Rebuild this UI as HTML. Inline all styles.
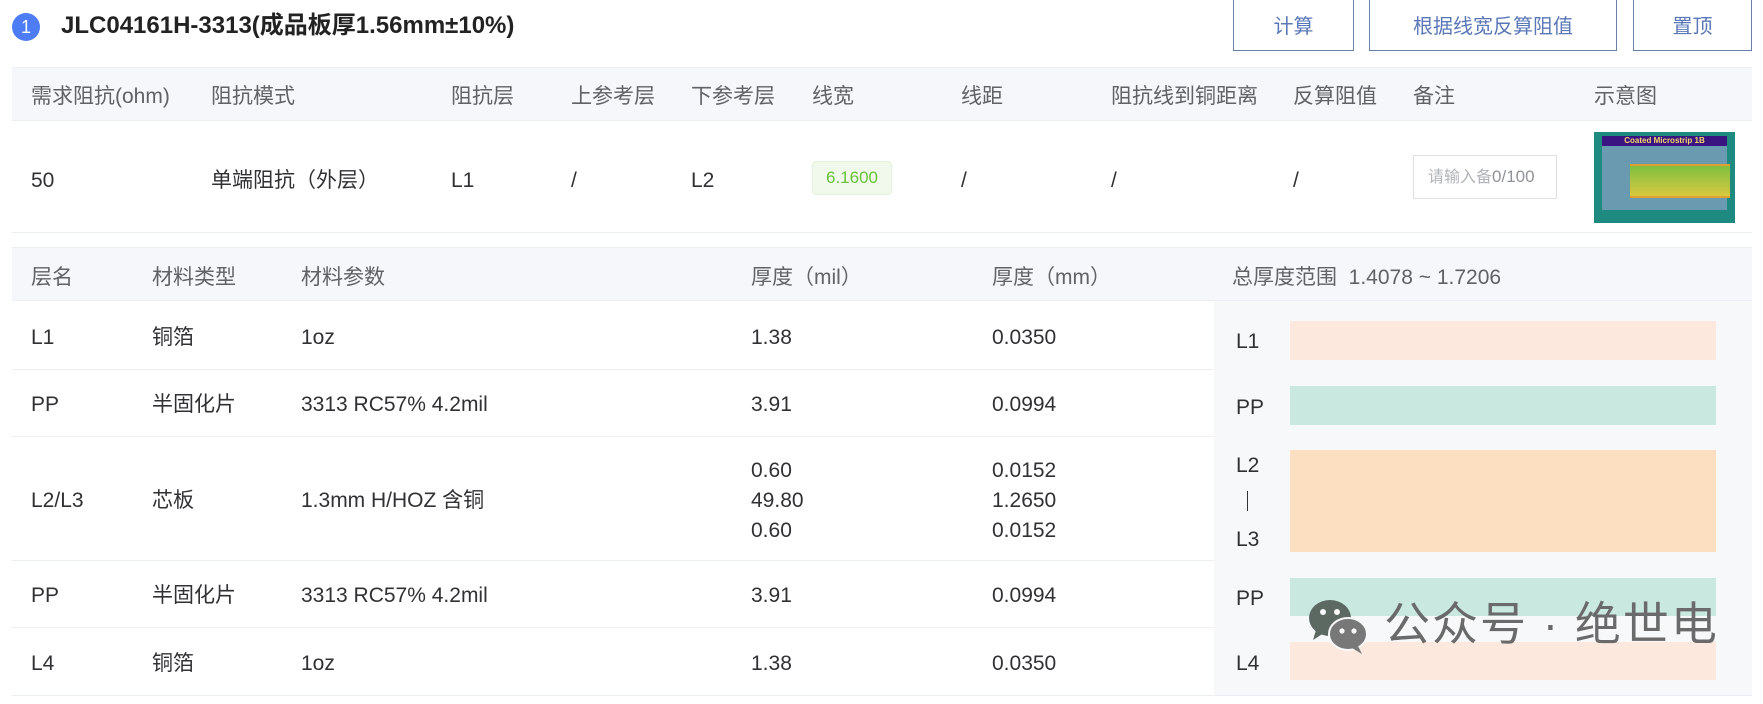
<!DOCTYPE html>
<html><head><meta charset="utf-8"><style>
*{margin:0;padding:0;box-sizing:border-box}
body{width:1763px;height:704px;background:#fff;position:relative;overflow:hidden;font-family:"Liberation Sans","Noto Sans CJK SC",sans-serif;font-size:21px;color:#303133}
.a{position:absolute;white-space:nowrap;line-height:26px}
.t{margin-top:3px}
.h{color:#606266}
.btn{position:absolute;top:-2px;height:53px;border:1px solid #6a7fa8;color:#5a78b8;font-size:20px;display:flex;align-items:center;justify-content:center;background:#fff}
.bar{position:absolute;left:1290px;width:426px}
.ln{position:absolute;height:1px;background:#ebeef5}
</style></head><body>
<div class="a" style="left:12px;top:13px;width:28px;height:28px;border-radius:50%;background:#4d7cf5;color:#fff;font-size:18px;text-align:center;line-height:28px">1</div>
<div class="a" style="left:61px;top:11px;font-size:24px;line-height:30px;font-weight:bold;color:#222">JLC04161H-3313(成品板厚1.56mm±10%)</div>
<div class="btn" style="left:1233px;width:121px">计算</div>
<div class="btn" style="left:1369px;width:248px">根据线宽反算阻值</div>
<div class="btn" style="left:1633px;width:119px">置顶</div>

<div class="a" style="left:12px;top:67px;width:1740px;height:54px;background:#f5f7fa;border-top:1px solid #ebeef5;border-bottom:1px solid #ebeef5"></div>
<div class="a h t" style="left:31px;top:81px">需求阻抗(ohm)</div>
<div class="a h t" style="left:211px;top:81px">阻抗模式</div>
<div class="a h t" style="left:451px;top:81px">阻抗层</div>
<div class="a h t" style="left:571px;top:81px">上参考层</div>
<div class="a h t" style="left:691px;top:81px">下参考层</div>
<div class="a h t" style="left:812px;top:81px">线宽</div>
<div class="a h t" style="left:961px;top:81px">线距</div>
<div class="a h t" style="left:1111px;top:81px">阻抗线到铜距离</div>
<div class="a h t" style="left:1293px;top:81px">反算阻值</div>
<div class="a h t" style="left:1413px;top:81px">备注</div>
<div class="a h t" style="left:1594px;top:81px">示意图</div>

<div class="a t" style="left:31px;top:165px">50</div>
<div class="a t" style="left:211px;top:165px">单端阻抗（外层）</div>
<div class="a t" style="left:451px;top:165px">L1</div>
<div class="a t" style="left:571px;top:165px">/</div>
<div class="a t" style="left:691px;top:165px">L2</div>
<div class="a" style="left:812px;top:161px;width:80px;height:34px;background:#f0f9eb;border:1px solid #e1f3d8;border-radius:4px;color:#67c23a;font-size:17px;text-align:center;line-height:32px">6.1600</div>
<div class="a t" style="left:961px;top:165px">/</div>
<div class="a t" style="left:1111px;top:165px">/</div>
<div class="a t" style="left:1293px;top:165px">/</div>
<div class="a" style="left:1413px;top:155px;width:144px;height:44px;border:1px solid #dcdfe6;font-size:16px;color:#b0b3b8;padding:8px 0 0 14px">请输入备<span style="color:#909399;font-size:17px">0/100</span></div>
<div class="a" style="left:1594px;top:132px;width:141px;height:91px;background:#1f8a80;padding:4px 8px;line-height:normal">
<div style="background:#3a1480;color:#f5d66a;font-size:8px;font-weight:bold;text-align:center;height:10px;line-height:10px">Coated Microstrip 1B</div>
<div style="background:#6a9ab0;height:64px;position:relative"><div style="position:absolute;left:28px;top:18px;width:100px;height:34px;background:linear-gradient(#7fbf40,#d8c840);border-top:2px solid #e0a030;border-bottom:2px solid #e0a030"></div></div></div>
<div class="ln" style="left:12px;top:232px;width:1740px"></div>

<div class="a" style="left:12px;top:247px;width:1740px;height:54px;background:#f5f7fa;border-top:1px solid #ebeef5;border-bottom:1px solid #ebeef5"></div>
<div class="a h t" style="left:31px;top:262px">层名</div>
<div class="a h t" style="left:152px;top:262px">材料类型</div>
<div class="a h t" style="left:301px;top:262px">材料参数</div>
<div class="a h t" style="left:751px;top:262px">厚度（mil）</div>
<div class="a h t" style="left:992px;top:262px">厚度（mm）</div>
<div class="a h t" style="left:1232px;top:262px">总厚度范围 &nbsp;1.4078 ~ 1.7206</div>

<div class="a" style="left:1214px;top:301px;width:538px;height:394px;background:#f7f8f9"></div>
<div class="ln" style="left:12px;top:369px;width:1202px"></div>
<div class="ln" style="left:12px;top:436px;width:1202px"></div>
<div class="ln" style="left:12px;top:560px;width:1202px"></div>
<div class="ln" style="left:12px;top:627px;width:1202px"></div>
<div class="ln" style="left:12px;top:695px;width:1740px"></div>

<div class="a t" style="left:31px;top:322px">L1</div><div class="a t" style="left:152px;top:322px">铜箔</div><div class="a t" style="left:301px;top:322px">1oz</div><div class="a t" style="left:751px;top:322px">1.38</div><div class="a t" style="left:992px;top:322px">0.0350</div>
<div class="a t" style="left:31px;top:389px">PP</div><div class="a t" style="left:152px;top:389px">半固化片</div><div class="a t" style="left:301px;top:389px">3313 RC57% 4.2mil</div><div class="a t" style="left:751px;top:389px">3.91</div><div class="a t" style="left:992px;top:389px">0.0994</div>
<div class="a t" style="left:31px;top:485px">L2/L3</div><div class="a t" style="left:152px;top:485px">芯板</div><div class="a t" style="left:301px;top:485px">1.3mm H/HOZ 含铜</div>
<div class="a t" style="left:751px;top:453px;line-height:30px">0.60<br>49.80<br>0.60</div><div class="a t" style="left:992px;top:453px;line-height:30px">0.0152<br>1.2650<br>0.0152</div>
<div class="a t" style="left:31px;top:580px">PP</div><div class="a t" style="left:152px;top:580px">半固化片</div><div class="a t" style="left:301px;top:580px">3313 RC57% 4.2mil</div><div class="a t" style="left:751px;top:580px">3.91</div><div class="a t" style="left:992px;top:580px">0.0994</div>
<div class="a t" style="left:31px;top:648px">L4</div><div class="a t" style="left:152px;top:648px">铜箔</div><div class="a t" style="left:301px;top:648px">1oz</div><div class="a t" style="left:751px;top:648px">1.38</div><div class="a t" style="left:992px;top:648px">0.0350</div>

<div class="bar" style="top:321px;height:39px;background:#fce8dc"></div>
<div class="bar" style="top:386px;height:39px;background:#c9e8e0"></div>
<div class="bar" style="top:450px;height:102px;background:#fcdfc0"></div>
<div class="bar" style="top:578px;height:38px;background:#c9e8e0"></div>
<div class="bar" style="top:642px;height:38px;background:#fce8dc"></div>
<div class="a t" style="left:1236px;top:326px">L1</div>
<div class="a t" style="left:1236px;top:392px">PP</div>
<div class="a t" style="left:1236px;top:450px">L2</div>
<div class="a" style="left:1247px;top:491px;width:1px;height:20px;background:#333"></div>
<div class="a t" style="left:1236px;top:524px">L3</div>
<div class="a t" style="left:1236px;top:583px">PP</div>
<div class="a t" style="left:1236px;top:648px">L4</div>

<svg class="a" style="left:1308px;top:598px" width="60" height="56" viewBox="0 0 60 56">
<ellipse cx="22" cy="20" rx="21" ry="18" fill="#5c6862"/><path d="M8 32 L5 42 L16 35Z" fill="#5c6862"/>
<ellipse cx="40" cy="36" rx="19" ry="16" fill="#787878" stroke="#f7f8f9" stroke-width="2"/><path d="M50 48 L54 56 L44 50Z" fill="#787878"/>
<circle cx="15" cy="14" r="3" fill="#f7f8f9"/><circle cx="29" cy="14" r="3" fill="#f7f8f9"/>
<circle cx="34" cy="33" r="2.6" fill="#f7f8f9"/><circle cx="46" cy="33" r="2.6" fill="#f7f8f9"/></svg>
<div class="a" style="left:1384px;top:596px;font-size:46px;line-height:56px;color:#6a6a6a;letter-spacing:2px">公众号 · 绝世电</div>
</body></html>
